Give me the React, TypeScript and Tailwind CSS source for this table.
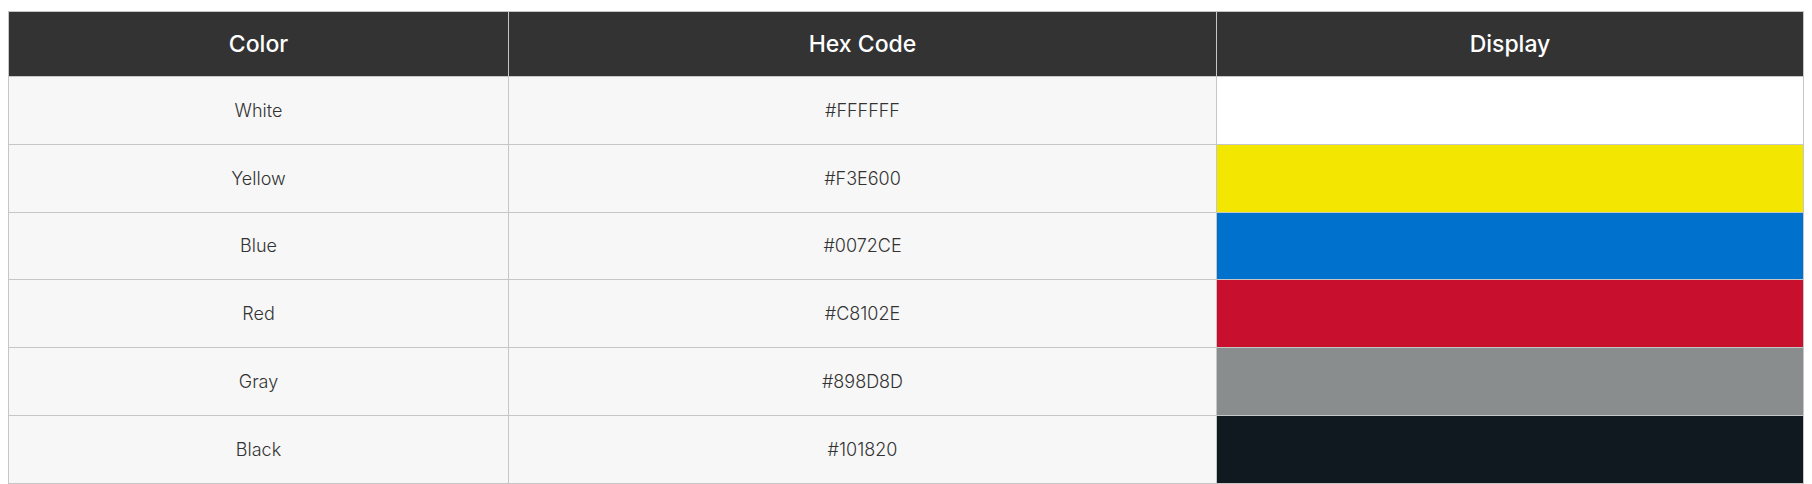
import React from "react";

const colors = [
  { name: "White", hex: "#FFFFFF" },
  { name: "Yellow", hex: "#F3E600" },
  { name: "Blue", hex: "#0072CE" },
  { name: "Red", hex: "#C8102E" },
  { name: "Gray", hex: "#898D8D" },
  { name: "Black", hex: "#101820" },
];

const App = () => {
  return (
    <div className="bg-white px-2 pt-[11px] font-['Inter',sans-serif]">
      <table className="w-full table-fixed border-collapse border border-[#c6c6c6]">
        <thead>
          <tr className="bg-[#333333] text-white h-[65px]">
            <th className="w-[500px] border border-[#c6c6c6] text-[23px] font-medium">Color</th>
            <th className="w-[708px] border border-[#c6c6c6] text-[23px] font-medium">Hex Code</th>
            <th className="border border-[#c6c6c6] text-[23px] font-medium">Display</th>
          </tr>
        </thead>
        <tbody>
          {colors.map((c) => (
            <tr key={c.name} className="h-[67.8px]">
              <td className="border border-[#c6c6c6] bg-[#f7f7f7] text-center text-[18px] font-light text-[#333333]">
                {c.name}
              </td>
              <td className="border border-[#c6c6c6] bg-[#f7f7f7] text-center text-[18px] font-light text-[#333333]">
                {c.hex}
              </td>
              <td className="border border-[#c6c6c6]" style={{ backgroundColor: c.hex }} />
            </tr>
          ))}
        </tbody>
      </table>
    </div>
  );
};

export default App;
